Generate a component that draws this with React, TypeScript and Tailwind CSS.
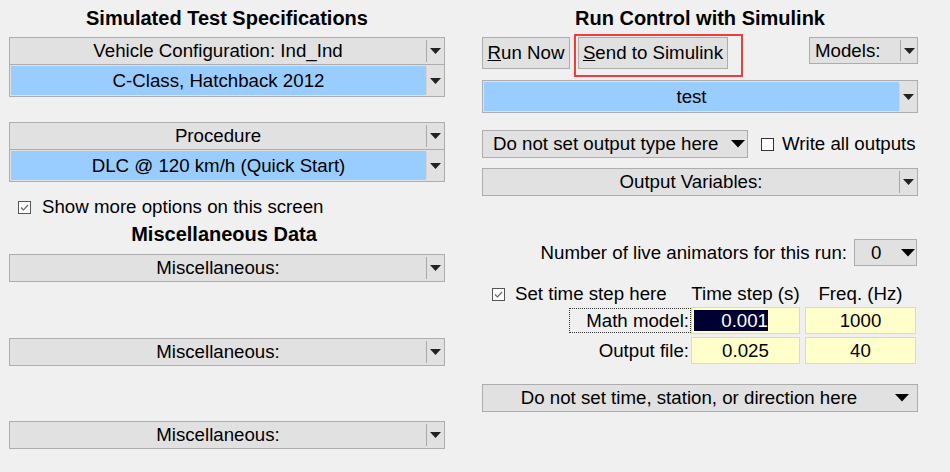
const FONT = { fontFamily: '"Liberation Sans", Arial, sans-serif' };

function SmallArrow() {
  return (
    <svg width="11" height="6" viewBox="0 0 11 6">
      <polygon points="0,0 11,0 5.5,6" fill="#222" />
    </svg>
  );
}

function BigArrow() {
  return (
    <svg width="14" height="8" viewBox="0 0 14 8">
      <polygon points="0,0 14,0 7,7.5" fill="#000" />
    </svg>
  );
}

function CheckBox({ checked }: { checked?: boolean }) {
  return (
    <svg width="13" height="13" viewBox="0 0 13 13" className="shrink-0">
      <rect x="0.5" y="0.5" width="12" height="12" fill="#fff" stroke={checked ? "#555" : "#333"} />
      {checked && <path d="M3 6.5 L5.5 9 L10 4" fill="none" stroke="#666" strokeWidth="1.2" />}
    </svg>
  );
}

// one row of a combo group: label in the middle, divider, arrow cell
function ComboRow({ label, blue, h }: { label: string; blue?: boolean; h: string }) {
  return (
    <div className={`flex ${h} bg-[#e1e1e1]`}>
      {blue ? (
        <div className="flex-1 m-px mr-0 bg-[#99ccff] flex items-center justify-center">{label}</div>
      ) : (
        <div className="flex-1 flex items-center justify-center">{label}</div>
      )}
      <div className={`w-px my-[2px] ${blue ? "bg-[#d4d4d4]" : "bg-[#a8a8a8]"}`} />
      <div className="w-[17px] flex items-center justify-center">
        <SmallArrow />
      </div>
    </div>
  );
}

function ComboGroup({ top, bottom }: { top: string; bottom: string }) {
  return (
    <div className="border border-[#adadad] bg-[#e1e1e1]">
      <ComboRow label={top} h="h-[26px]" />
      <div className="h-px bg-[#adadad]" />
      <ComboRow label={bottom} blue h="h-[31px]" />
    </div>
  );
}

function SingleCombo({ label, blue, h = "h-[26px]" }: { label: string; blue?: boolean; h?: string }) {
  return (
    <div className="border border-[#adadad]">
      <ComboRow label={label} blue={blue} h={h} />
    </div>
  );
}

function Field({ value, selected }: { value: string; selected?: boolean }) {
  return (
    <div className="h-[27px] border border-[#c6dcf2] bg-[#ffffcc] flex items-center justify-center">
      {selected ? (
        <div className="self-stretch w-full flex py-[2px] pl-[2px]">
          <div className="w-[74px] bg-[#000033] text-white flex items-center justify-end">{value}</div>
        </div>
      ) : (
        value
      )}
    </div>
  );
}

export default function App() {
  return (
    <div className="w-[950px] h-[472px] bg-[#f0f0f0] text-black text-[18.7px] leading-[22px] flex gap-[37px] pl-[9px] overflow-hidden" style={FONT}>
      {/* Left: test specs */}
      <div className="w-[436px] flex flex-col">
        <div className="mt-[7px] h-[22px] leading-[22px] text-center font-bold text-[20px]">Simulated Test Specifications</div>
        <div className="mt-[8px]">
          <ComboGroup top="Vehicle Configuration: Ind_Ind" bottom="C-Class, Hatchback 2012" />
        </div>
        <div className="mt-[25px]">
          <ComboGroup top="Procedure" bottom="DLC @ 120 km/h (Quick Start)" />
        </div>
        <div className="mt-[15px] h-[20px] flex items-center pl-[9px] gap-[11px]">
          <CheckBox checked />
          <span>Show more options on this screen</span>
        </div>
        <div className="mt-[6px] h-[22px] leading-[22px] text-center font-bold text-[20px] pr-[6px]">Miscellaneous Data</div>
        <div className="mt-[9px]">
          <SingleCombo label="Miscellaneous:" />
        </div>
        <div className="mt-[56px]">
          <SingleCombo label="Miscellaneous:" />
        </div>
        <div className="mt-[55px]">
          <SingleCombo label="Miscellaneous:" />
        </div>
      </div>

      {/* Right: run control */}
      <div className="w-[436px] flex flex-col">
        <div className="mt-[7px] h-[22px] leading-[22px] text-center font-bold text-[20px]">Run Control with Simulink</div>
        <div className="mt-[8px] flex items-start">
          <button className="w-[88px] h-[32px] border border-[#adadad] bg-[#e1e1e1] flex items-center justify-center">
            <span><span className="underline underline-offset-[1px]">R</span>un Now</span>
          </button>
          <div className="relative ml-[8px]">
            <button className="w-[150px] h-[32px] border border-[#adadad] bg-[#e1e1e1] flex items-center justify-center">
              <span><span className="underline underline-offset-[1px]">S</span>end to Simulink</span>
            </button>
            <span className="absolute -left-[4px] -top-[3px] w-[169px] h-[43px] border-2 border-[#f03c3c] pointer-events-none" />
          </div>
          <div className="ml-auto w-[109px] h-[27px] border border-[#adadad] bg-[#e1e1e1] flex">
            <div className="flex-1 flex items-center pl-[5px]">Models:</div>
            <div className="w-px my-[2px] bg-[#a8a8a8]" />
            <div className="w-[16px] flex items-center justify-center">
              <SmallArrow />
            </div>
          </div>
        </div>
        <div className="mt-[11px]">
          <SingleCombo label="test" blue h="h-[31px]" />
        </div>
        <div className="mt-[17px] h-[28px] flex items-center">
          <div className="w-[266px] h-full border border-[#adadad] bg-[#e1e1e1] flex items-center pl-[10px] pr-[2px]">
            <span className="flex-1">Do not set output type here</span>
            <BigArrow />
          </div>
          <div className="ml-[13px] flex items-center gap-[8px]">
            <CheckBox />
            <span>Write all outputs</span>
          </div>
        </div>
        <div className="mt-[10px]">
          <SingleCombo label="Output Variables:" />
        </div>
        <div className="mt-[43px] flex items-center justify-end gap-[7px] pr-[1px]">
          <span>Number of live animators for this run:</span>
          <div className="w-[63px] h-[27px] border border-[#adadad] bg-[#e1e1e1] flex items-center pl-[16px] pr-[1px]">
            <span className="flex-1">0</span>
            <BigArrow />
          </div>
        </div>
        <div className="mt-[18px] h-[20px] flex items-center">
          <div className="w-[209px] flex items-center gap-[10px] pl-[10px]">
            <CheckBox checked />
            <span>Set time step here</span>
          </div>
          <div className="w-[109px] text-center">Time step (s)</div>
          <div className="ml-[5px] w-[111px] text-center">Freq. (Hz)</div>
        </div>
        <div className="mt-[3px] flex items-center">
          <div className="w-[209px] flex justify-end">
            <div className="w-[122px] h-[25px] border border-dotted border-[#333] flex items-center justify-end pr-[1px]">Math model:</div>
          </div>
          <div className="w-[109px]">
            <Field value="0.001" selected />
          </div>
          <div className="ml-[5px] w-[111px]">
            <Field value="1000" />
          </div>
        </div>
        <div className="mt-[3px] flex items-center">
          <div className="w-[209px] text-right pr-[2px]">Output file:</div>
          <div className="w-[109px]">
            <Field value="0.025" />
          </div>
          <div className="ml-[5px] w-[111px]">
            <Field value="40" />
          </div>
        </div>
        <div className="mt-[20px] h-[28px] border border-[#adadad] bg-[#e1e1e1] flex items-center">
          <span className="flex-1 text-center">Do not set time, station, or direction here</span>
          <div className="w-[22px] flex justify-start">
            <BigArrow />
          </div>
        </div>
      </div>
    </div>
  );
}
